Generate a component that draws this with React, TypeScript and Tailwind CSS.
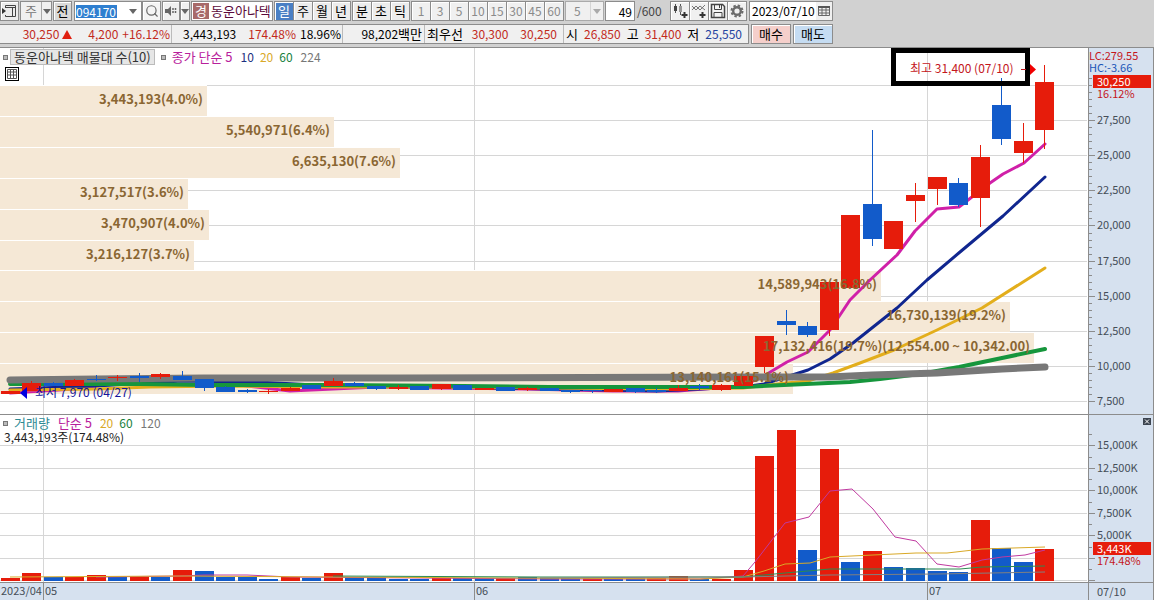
import React from "react";
import { Search } from "lucide-react";

interface Candle {
  top: number;
  bottom: number;
  high: number;
  low: number;
  up: boolean;
}

const RED = "#e61c0b";
const BLUE = "#125bca";

// body top, body bottom, wick top, wick bottom, up(1)/down(0)
const rawCandles: number[][] = [
  [391, 394, 391, 394, 1], [383, 391, 381, 391, 1], [383, 386, 382, 386, 0], [380, 386, 379, 386, 1],
  [379, 380, 375, 381, 0], [377, 378, 375, 381, 1], [376, 378, 373, 382, 0], [374, 377, 373, 379, 1],
  [376, 380, 371, 380, 0], [379, 388, 379, 391, 0], [387, 392, 386, 392, 0], [390, 392, 389, 393, 0],
  [391, 392, 389, 394, 1], [388, 391, 387, 391, 1], [385, 389, 385, 389, 0], [381, 386, 378, 386, 1],
  [383, 386, 382, 386, 0], [386, 389, 386, 390, 0], [387, 389, 385, 390, 1], [386, 390, 386, 390, 0],
  [384, 389, 384, 390, 1], [385, 390, 385, 390, 0], [388, 390, 388, 390, 1], [387, 391, 387, 391, 0],
  [388, 390, 387, 391, 1], [388, 391, 388, 391, 0], [390, 392, 390, 393, 0], [390, 391, 390, 393, 0],
  [389, 392, 389, 392, 1], [388, 392, 388, 393, 0], [390, 392, 388, 393, 0], [388, 391, 385, 391, 1],
  [386, 388, 384, 390, 0], [385, 390, 384, 391, 1], [376, 386, 376, 386, 1], [336, 367, 336, 373, 1],
  [321, 325, 310, 335, 0], [326, 335, 322, 337, 0], [282, 330, 282, 336, 1], [215, 288, 215, 288, 1],
  [204, 239, 130, 246, 0], [221, 249, 221, 249, 1], [195, 201, 183, 222, 1], [177, 189, 177, 205, 1],
  [183, 205, 178, 207, 0], [157, 198, 145, 227, 1], [105, 139, 78, 145, 0], [141, 153, 123, 163, 1],
  [82, 130, 65, 149, 1],
];

const candles: Candle[] = rawCandles.map(([top, bottom, high, low, up]) => ({
  top,
  bottom,
  high,
  low,
  up: up === 1,
}));

// bar top, up(1)/down(0)
const volumes: number[][] = [
  [578, 1], [573, 1], [577, 0], [577, 1], [575, 1], [577, 0], [577, 1], [577, 0], [570, 1], [571, 0],
  [577, 0], [577, 0], [579, 0], [577, 1], [578, 0], [573, 1], [577, 0], [577, 0], [579, 0], [579, 0],
  [578, 1], [578, 0], [578, 0], [578, 1], [577, 0], [578, 0], [578, 0], [578, 1], [578, 0], [578, 0],
  [578, 1], [576, 1], [579, 0], [579, 1], [570, 1], [456, 1], [430, 1], [550, 0], [449, 1], [562, 0],
  [551, 1], [567, 0], [568, 0], [571, 0], [572, 0], [520, 1], [548, 0], [562, 0], [549, 1],
];

const centerOf = (index: number) => Math.floor(10 + index * 21.56);

const profile = [
  { width: 207, label: "3,443,193(4.0%)" },
  { width: 334, label: "5,540,971(6.4%)" },
  { width: 400, label: "6,635,130(7.6%)" },
  { width: 188, label: "3,127,517(3.6%)" },
  { width: 209, label: "3,470,907(4.0%)" },
  { width: 194, label: "3,216,127(3.7%)" },
  { width: 881, label: "14,589,943(16.8%)" },
  { width: 1010, label: "16,730,139(19.2%)" },
  { width: 1034, label: "17,132,416(19.7%)(12,554.00 ~ 10,342.00)" },
  { width: 793, label: "13,140,161(15.1%)" },
];

const profileY = (index: number) => Math.round(86 + index * 30.9);

const priceTicks = [
  { y: 120, label: "27,500" },
  { y: 155, label: "25,000" },
  { y: 190, label: "22,500" },
  { y: 225, label: "20,000" },
  { y: 261, label: "17,500" },
  { y: 296, label: "15,000" },
  { y: 331, label: "12,500" },
  { y: 366, label: "10,000" },
  { y: 401, label: "7,500" },
];

const volumeTicks = [
  { y: 445, label: "15,000K" },
  { y: 468, label: "12,500K" },
  { y: 490, label: "10,000K" },
  { y: 513, label: "7,500K" },
  { y: 535, label: "5,000K" },
];

const monthLines = [43, 474, 927];

const averages = [
  {
    color: "#d020a8",
    width: 3,
    points: "10,393 74,389 118,383 161,379 204,380 247,386 290,391 333,389 377,387 441,388 527,389 613,391 678,391 743,386 767,374 787,362 808,352 830,330 850,300 870,280 897,255 915,231 937,209 959,207 990,183 1003,174 1024,163 1045,144",
  },
  {
    color: "#10268f",
    width: 3,
    points: "10,389 96,386 182,381 258,382 333,386 441,387 549,389 657,391 743,387 764,384 786,377 808,370 830,359 853,343 897,308 927,280 960,252 1003,216 1045,177",
  },
  {
    color: "#e3ae1c",
    width: 3,
    points: "10,390 96,389 150,387 225,386 333,387 441,387 549,388 657,389 743,388 786,383 808,381 833,373 860,363 894,350 937,330 982,308 1045,268",
  },
  {
    color: "#16963c",
    width: 4,
    points: "10,384 140,384 204,385 333,385 463,386 549,387 743,387 806,384 850,382 880,379 920,374 959,367 1002,358 1045,349",
  },
  {
    color: "#787878",
    width: 7,
    points: "10,380 96,379 204,378 400,378 743,377 829,377 872,375 937,373 1002,369 1045,367",
  },
];

const volumeAverages = [
  {
    color: "#c03aa0",
    points: "96,577 182,576 204,575 247,575 290,577 549,579 700,579 743,576 755,562 785,523 809,517 830,491 852,489 873,509 895,537 916,541 937,564 959,567 982,560 1002,557 1025,555 1045,550",
  },
  {
    color: "#d9a928",
    points: "10,577 182,576 333,577 700,579 743,577 764,571 785,564 810,563 830,557 873,555 916,553 947,553 982,549 1045,547",
  },
  { color: "#2c8a50", points: "333,576 540,577 700,577 743,577 785,573 830,569 960,569 982,567 1045,566" },
  { color: "#808080", points: "540,578 700,577 743,577 830,575 937,574 1045,572" },
];

const Caret: React.FC = () => (
  <svg viewBox="0 0 8 5" className="w-2 h-[5px] shrink-0" aria-hidden="true">
    <path d="M0 0h8L4 5z" fill="#666" />
  </svg>
);

interface ToolButtonProps {
  label?: string;
  className?: string;
  children: React.ReactNode;
}

const ToolButton: React.FC<ToolButtonProps> = ({ label, className = "", children }) => (
  <button
    type="button"
    aria-label={label}
    className={`h-5 shrink-0 flex items-center justify-center border border-[#8c8c8c] shadow-[inset_1px_1px_0_#fff] ${className}`}
  >
    {children}
  </button>
);

const Toolbar: React.FC = () => (
  <div className="flex h-5 items-center text-[12px]">
    <ToolButton label="창 전환" className="w-[19px] bg-[#ececec]">
      <svg viewBox="0 0 15 14" className="w-[15px] h-[14px]" aria-hidden="true">
        <path d="M0 4l4 3-4 3z" fill="#333" />
        <path d="M3.500 3V1.500h10v11h-10V11M3 3.500h10M10.500 4v8" fill="none" stroke="#444" />
      </svg>
    </ToolButton>
    <div className="ml-px flex h-5 w-8 shrink-0 items-center border border-[#8c8c8c] bg-[#f0f0f0] pl-1">
      <select aria-label="종목 구분" className="w-4 appearance-none bg-transparent text-[13px] text-[#777]">
        <option>주</option>
      </select>
      <span className="flex h-full flex-1 items-center justify-center border-l border-[#aaa]">
        <Caret />
      </span>
    </div>
    <ToolButton className="ml-px w-[19px] bg-[#d9d9d9] text-[13px]">전</ToolButton>
    <div className="ml-0.5 flex h-5 w-[68px] shrink-0 items-center border border-[#8c8c8c] bg-white pl-px">
      <input
        aria-label="종목코드"
        defaultValue="094170"
        className="h-[13px] w-[41px] bg-[#2f7fd0] leading-none text-white"
      />
      <button type="button" aria-label="종목 목록" className="ml-auto flex h-full w-4 items-center justify-center">
        <Caret />
      </button>
    </div>
    <ToolButton label="종목 검색" className="w-[19px] bg-[#f4f4f4]">
      <Search size={14} color="#666" />
    </ToolButton>
    <ToolButton label="음성" className="ml-px w-[18px] bg-[#f0f0f0]">
      <svg viewBox="0 0 14 12" className="w-[14px] h-3" aria-hidden="true">
        <path d="M1 4h3l3-3v10L4 8H1z" fill="#666" />
        <path d="M9 3v6M11.500 3v6" stroke="#666" strokeWidth="1.500" strokeDasharray="2 1" />
      </svg>
    </ToolButton>
    <ToolButton label="음성 설정" className="w-2.5 bg-[#f0f0f0]">
      <Caret />
    </ToolButton>
    <div className="ml-px flex h-5 w-[82px] shrink-0 items-center whitespace-nowrap border border-[#8c8c8c] bg-white pl-px text-[13px]">
      <span className="flex h-4 w-4 shrink-0 items-center justify-center bg-[#a86a6a] text-white">경</span>
      <span className="ml-0.5 text-[#5c0a3c]">동운아나텍</span>
    </div>
    <div className="ml-px flex shrink-0 text-[13px]">
      <ToolButton className="w-5 bg-[#4a7fc4] text-white">일</ToolButton>
      <ToolButton className="-ml-px w-5 bg-[#ececec]">주</ToolButton>
      <ToolButton className="-ml-px w-5 bg-[#ececec]">월</ToolButton>
      <ToolButton className="-ml-px w-5 bg-[#ececec]">년</ToolButton>
    </div>
    <div className="ml-px flex shrink-0 text-[13px]">
      <ToolButton className="w-5 bg-[#ececec]">분</ToolButton>
      <ToolButton className="-ml-px w-5 bg-[#ececec]">초</ToolButton>
      <ToolButton className="-ml-px w-5 bg-[#ececec]">틱</ToolButton>
    </div>
    <div className="ml-px flex shrink-0 text-[#8a8a8a]">
      {["1", "3", "5", "10", "15", "30", "45", "60"].map((minute) => (
        <ToolButton key={minute} className="-mr-px w-5 bg-[#f0f0f0]">
          {minute}
        </ToolButton>
      ))}
    </div>
    <div className="ml-0.5 flex h-5 w-[39px] shrink-0 items-center border border-[#aaa] bg-[#f0f0f0] text-[#8a8a8a]">
      <select aria-label="분 단위" className="w-6 appearance-none bg-transparent pl-2">
        <option>5</option>
      </select>
      <span className="flex h-full flex-1 items-center justify-center border-l border-[#bbb] opacity-50">
        <Caret />
      </span>
    </div>
    <label className="ml-px flex h-5 shrink-0 items-center text-[#444]">
      <input
        aria-label="표시 봉 수"
        defaultValue="49"
        className="mr-0.5 h-5 w-[30px] border border-[#8c8c8c] bg-white pr-0.5 text-right text-black"
      />
      /600
    </label>
    <div className="ml-auto flex shrink-0">
      <ToolButton label="차트 유형 추가" className="w-5 bg-[#f0f0f0]">
        <svg viewBox="0 0 16 16" className="w-4 h-4" aria-hidden="true">
          <path d="M3.500 1v9M8.500 1v11" stroke="#555" />
          <path d="M2 3h3v5H2z" fill="#444" />
          <path d="M7 3h3v6H7z" fill="#999" />
          <path d="M12.500 9v6M9.500 12h6" stroke="#333" strokeWidth="2" />
        </svg>
      </ToolButton>
      <ToolButton label="지표 추가" className="-ml-px w-5 bg-[#f0f0f0]">
        <svg viewBox="0 0 16 16" className="w-4 h-4" aria-hidden="true">
          <path d="M1 7l4-4 4 4 5-5M1 3l4 4 4-4 5 4" fill="none" stroke="#777" />
          <path d="M11.500 9v6M8.500 12h6" stroke="#333" strokeWidth="2" />
        </svg>
      </ToolButton>
      <ToolButton label="저장" className="-ml-px w-5 bg-[#f0f0f0]">
        <svg viewBox="0 0 16 16" className="w-4 h-4" aria-hidden="true">
          <path d="M1.500 1.500h11l2 2v11h-13z" fill="#f4f4f4" stroke="#444" strokeWidth="1.500" />
          <path d="M4.500 2v4.500h7V2M9.500 2v3M4 14V9.500h8V14" fill="none" stroke="#444" />
        </svg>
      </ToolButton>
      <ToolButton label="설정" className="-ml-px w-5 bg-[#f0f0f0]">
        <svg viewBox="0 0 16 16" className="w-4 h-4" fill="none" stroke="#6a6a6a" aria-hidden="true">
          <circle cx="8" cy="8" r="3.800" strokeWidth="2.400" />
          <circle cx="8" cy="8" r="5.500" strokeWidth="2" strokeDasharray="2.400 1.920" />
        </svg>
      </ToolButton>
    </div>
    <div className="ml-0.5 flex h-5 w-[84px] shrink-0 items-center border border-[#8c8c8c] bg-white pl-0.5">
      <input aria-label="기준일" defaultValue="2023/07/10" className="w-16 bg-transparent" />
      <button type="button" aria-label="달력" className="flex h-full flex-1 items-center justify-center bg-[#f0f0f0]">
        <svg viewBox="0 0 12 12" className="w-3 h-3" aria-hidden="true">
          <path d="M.5 1.500h11v9H.5zM.5 5h11M.5 8h11M4 3v8M8 3v8" fill="none" stroke="#666" />
          <path d="M0 1h12v2H0z" fill="#555" />
        </svg>
      </button>
    </div>
  </div>
);

const QuoteBar: React.FC = () => (
  <div className="flex h-5 items-center whitespace-nowrap text-[12px]">
    <div className="flex h-5 flex-1 items-center border border-l-0 border-[#8c8c8c] bg-[#f0f0f0] text-[#c22a1c]">
      <div className="flex h-full w-[172px] items-center border-r border-[#bbb] pr-px">
        <span className="ml-auto">30,250</span>
        <svg viewBox="0 0 10 9" className="ml-[3px] w-2.5 h-[9px]" aria-hidden="true">
          <path d="M5 0l5 9H0z" fill="#e02010" />
        </svg>
        <span className="ml-4">4,200</span>
        <span className="ml-1">+16.12%</span>
      </div>
      <div className="flex h-full w-[171px] items-center justify-end border-r border-[#bbb] pr-px">
        <span className="text-black">3,443,193</span>
        <span className="ml-3">174.48%</span>
        <span className="ml-1 text-black">18.96%</span>
      </div>
      <div className="flex h-full w-[82px] items-center justify-end border-r border-[#bbb] pr-0.5 text-black">
        98,202<span className="text-[13px]">백만</span>
      </div>
      <div className="flex h-full w-[139px] items-center border-r border-[#bbb] px-0.5">
        <span className="text-[13px] text-black">최우선</span>
        <span className="ml-auto">30,300</span>
        <span className="ml-3 mr-1">30,250</span>
      </div>
      <div className="flex h-full flex-1 items-center justify-between pl-0.5 pr-1.5">
        <span className="text-[13px] text-black">시</span>
        <span>26,850</span>
        <span className="text-[13px] text-black">고</span>
        <span>31,400</span>
        <span className="text-[13px] text-black">저</span>
        <span className="text-[#2343a0]">25,550</span>
      </div>
    </div>
    <ToolButton className="ml-0.5 w-10 bg-[#f5cfcb] text-[13px]">매수</ToolButton>
    <ToolButton className="ml-0.5 w-10 bg-[#c5dcf2] text-[13px]">매도</ToolButton>
  </div>
);

const PriceChart: React.FC = () => (
  <svg viewBox="0 48 1088 366" className="block w-full bg-white" role="img" aria-label="동운아나텍 일봉 차트">
    <g stroke="#d6d6d6" shapeRendering="crispEdges">
      <path d="M0 85.500H1087" />
      {priceTicks.map((tick) => (
        <path key={tick.label} d={`M0 ${tick.y}.5H1087`} />
      ))}
      {monthLines.map((x) => (
        <path key={x} d={`M${x}.5 48V414`} />
      ))}
    </g>
    {profile.map((row, i) => (
      <g key={row.label}>
        <rect x={0} y={profileY(i) - 1} width={row.width} height={31} fill="#fff" />
        <rect x={0} y={profileY(i)} width={row.width} height={30} fill="#f5e8d6" />
      </g>
    ))}
    {averages.map((line) => (
      <polyline
        key={line.color}
        points={line.points}
        fill="none"
        stroke={line.color}
        strokeWidth={line.width}
        strokeLinecap="round"
        strokeLinejoin="round"
      />
    ))}
    <g shapeRendering="crispEdges">
      {candles.map((candle, i) => {
        const x = centerOf(i);
        const color = candle.up ? RED : BLUE;
        return (
          <g key={i} fill={color}>
            <rect x={x} y={candle.high} width={1} height={candle.low - candle.high} />
            <rect x={x - 9} y={candle.top} width={19} height={candle.bottom - candle.top} />
          </g>
        );
      })}
    </g>
    <rect x={893.5} y={50.5} width={134} height={33} fill="none" stroke="#000" strokeWidth={5} />
    <g fill="#8a6632" fontSize={13} fontWeight={700} textAnchor="end">
      {profile.map((row, i) => (
        <text key={row.label} x={row.width - 4} y={profileY(i) + 18}>
          {row.label}
        </text>
      ))}
    </g>
    <text x={910} y={73} fontSize={12} fill="#c4161c">
      최고 31,400 (07/10)
    </text>
    <path d="M1021 69.500h5" stroke="#c4161c" />
    <path d="M1030 64l6 5.500-6 5.500z" fill="#f00000" />
    <path d="M27 387l-7 6 7 6z" fill="#0000e0" />
    <text x={35} y={397} fontSize={12} fill="#14149c">
      최저 7,970 (04/27)
    </text>
  </svg>
);

const VolumeChart: React.FC = () => (
  <svg viewBox="0 415 1088 167" className="block w-full bg-white" role="img" aria-label="거래량 차트">
    <g stroke="#d6d6d6" shapeRendering="crispEdges">
      {volumeTicks.map((tick) => (
        <path key={tick.label} d={`M0 ${tick.y}.5H1087`} />
      ))}
      <path d="M0 558.500H1087M0 580.500H1087" />
      {monthLines.map((x) => (
        <path key={x} d={`M${x}.5 415V582`} />
      ))}
    </g>
    <g shapeRendering="crispEdges">
      {volumes.map(([top, up], i) => (
        <rect key={i} x={centerOf(i) - 9} y={top} width={19} height={581 - top} fill={up ? RED : BLUE} />
      ))}
    </g>
    {volumeAverages.map((line) => (
      <polyline key={line.color} points={line.points} fill="none" stroke={line.color} />
    ))}
  </svg>
);

const PriceAxis: React.FC = () => (
  <svg viewBox="0 48 66 366" className="block w-full bg-[#d6e1ef]" fontSize={11} fill="#454e58">
    <g stroke="#8c8c8c" shapeRendering="crispEdges">
      <path d="M.5 48V414M65.500 48V414" />
      {priceTicks.map((tick) => (
        <path
          key={tick.label}
          d={`M1 ${tick.y}.5h6M1 ${tick.y - 7}.5h3M1 ${tick.y - 14}.5h3M1 ${tick.y - 21}.5h3M1 ${tick.y - 28}.5h3`}
        />
      ))}
      <path d="M1 85.500h3M1 78.500h3" />
    </g>
    {priceTicks.map((tick) => (
      <text key={tick.label} x={9} y={tick.y + 4}>
        {tick.label}
      </text>
    ))}
    <text x={1} y={60} fill="#c4161c">LC:279.55</text>
    <text x={1} y={72} fill="#1a56b8">HC:-3.66</text>
    <rect x={5} y={75} width={58} height={13} fill={RED} />
    <text x={9} y={86} fill="#fff">30,250</text>
    <text x={9} y={98} fill="#c4161c">16.12%</text>
  </svg>
);

const VolumeAxis: React.FC = () => (
  <svg viewBox="0 415 66 167" className="block w-full bg-[#d6e1ef]" fontSize={11} fill="#454e58">
    <g stroke="#8c8c8c" shapeRendering="crispEdges">
      <path d="M.5 415V582M65.500 415V582" />
      {volumeTicks.map((tick) => (
        <path key={tick.label} d={`M1 ${tick.y}.5h6M1 ${tick.y - 11}.5h3`} />
      ))}
      <path d="M1 547.500h3M1 558.500h6M1 569.500h3M1 580.500h6" />
    </g>
    {volumeTicks.map((tick) => (
      <text key={tick.label} x={9} y={tick.y + 4}>
        {tick.label}
      </text>
    ))}
    <rect x={5} y={542} width={58} height={13} fill={RED} />
    <text x={9} y={553} fill="#fff">3,443K</text>
    <text x={9} y={565} fill="#c4161c">174.48%</text>
    <rect x={55} y={418} width={8} height={7} fill="#3c4450" />
    <path d="M57 419.500l4 4M61 419.500l-4 4" stroke="#fff" />
  </svg>
);

const Marker: React.FC = () => <span className="h-[5px] w-[5px] shrink-0 border border-[#777] bg-[#bbb]" />;

const App: React.FC = () => {
  return (
    <div className="w-full overflow-hidden bg-[#d1d1d1] font-['Noto_Sans_CJK_KR',sans-serif] text-[13px] leading-4 text-black">
      <header className="border-b border-[#8c8c8c] pb-[3px] pt-px">
        <div className="flex w-[833px] flex-col gap-[3px]">
          <Toolbar />
          <QuoteBar />
        </div>
      </header>

      <main>
        <section className="relative flex border-b border-[#8c8c8c]">
          <div className="min-w-0 flex-1">
            <PriceChart />
          </div>
          <div className="w-[66px] shrink-0">
            <PriceAxis />
          </div>
          {/* Legend over the price pane */}
          <div className="absolute left-[3px] top-px flex items-center whitespace-nowrap">
            <Marker />
            <span className="ml-0.5 border border-[#bbb] bg-[#e6e6e6] px-[3px] leading-[14px] text-[#333]">
              동운아나텍 매물대 수(10)
            </span>
            <span className="ml-1.5 flex items-center">
              <Marker />
            </span>
            <span className="ml-1.5 text-[#b8209c]">종가 단순 5</span>
            <span className="ml-2 text-[12px] text-[#1c3080]">10</span>
            <span className="ml-1.5 text-[12px] text-[#d9a928]">20</span>
            <span className="ml-1.5 text-[12px] text-[#16803c]">60</span>
            <span className="ml-2 text-[12px] text-[#777]">224</span>
          </div>
          <button type="button" aria-label="데이터 표" className="absolute left-[5px] top-[19px] border border-black bg-white">
            <svg viewBox="0 0 12 12" className="block w-3 h-3" aria-hidden="true">
              <path d="M1.500 1.500h9v9h-9zM1 4h10M1 7h10M4.500 2v9M7.500 2v9" fill="none" stroke="#555" />
            </svg>
          </button>
        </section>

        <section className="relative flex border-b border-[#8c8c8c]">
          <div className="min-w-0 flex-1">
            <VolumeChart />
          </div>
          <div className="w-[66px] shrink-0">
            <VolumeAxis />
          </div>
          {/* Legend over the volume pane */}
          <div className="absolute left-[3px] top-px whitespace-nowrap leading-[14px]">
            <div className="flex items-center">
              <Marker />
              <span className="ml-1.5 text-[#2c8a94]">거래량</span>
              <span className="ml-2 text-[#b8209c]">단순 5</span>
              <span className="ml-2 text-[12px] text-[#d9a928]">20</span>
              <span className="ml-1.5 text-[12px] text-[#16803c]">60</span>
              <span className="ml-2 text-[12px] text-[#777]">120</span>
            </div>
            <div className="pl-px text-[12px] leading-[14px] text-[#222]">3,443,193주(174.48%)</div>
          </div>
        </section>

        <footer className="flex bg-[#d6e1ef] text-[11px] text-[#454e58]">
          <svg viewBox="0 583 1088 17" className="block min-w-0 flex-1" fill="#454e58">
            <path d="M43.500 583v17M474.500 583v17M927.500 583v17" stroke="#8c8c8c" />
            <text x={1} y={595}>2023/04</text>
            <text x={45} y={595}>05</text>
            <text x={476} y={595}>06</text>
            <text x={929} y={595}>07</text>
          </svg>
          <div className="w-[66px] shrink-0 border-x border-[#8c8c8c] pl-2">07/10</div>
        </footer>
      </main>
    </div>
  );
};

export default App;
